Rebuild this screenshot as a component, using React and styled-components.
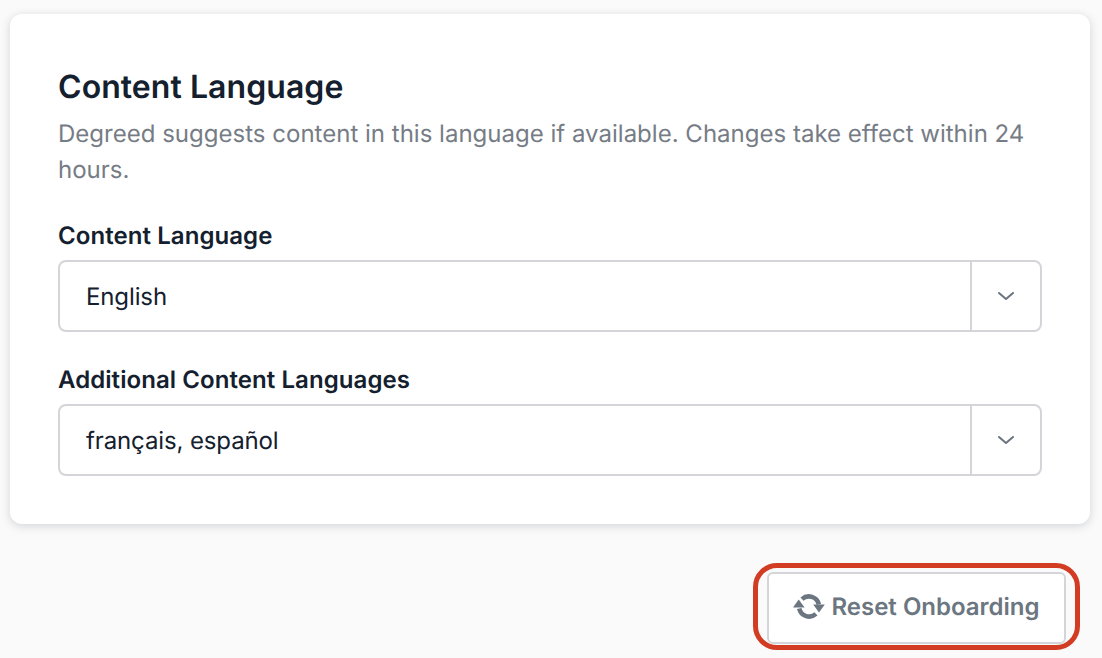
import React from 'react';
import styled, { createGlobalStyle } from 'styled-components';

const GlobalStyle = createGlobalStyle`
  html, body {
    margin: 0;
    padding: 0;
    background: #fafafa;
    font-family: Inter, "Liberation Sans", sans-serif;
    text-rendering: geometricPrecision;
  }
`;

const RefreshIcon = () => (
  <svg width="32" height="25" viewBox="0 0 32 25" fill="#6b7680">
    <path d="M9 5.1 A10.2 10.2 0 0 1 25.8 10.4" fill="none" stroke="#6b7680" strokeWidth="4.6" />
    <path d="M6.2 14.6 A10.2 10.2 0 0 0 23 19.9" fill="none" stroke="#6b7680" strokeWidth="4.6" />
    <path d="M5.7 5.6 L11.6 13.4 H0 Z" />
    <path d="M26 18.6 L20.2 10.6 H31.8 Z" />
  </svg>
);

const Chevron = () => (
  <svg width="18" height="10" viewBox="0 0 18 10" fill="none" stroke="#6b7280" strokeWidth="2" strokeLinecap="round" strokeLinejoin="round">
    <path d="M2 2 L9 8 L16 2" />
  </svg>
);

const fields = [
  { label: 'Content Language', value: 'English' },
  { label: 'Additional Content Languages', value: 'français, español' },
];

export default function App() {
  return (
    <Page>
      <GlobalStyle />
      <Card>
        <Title>Content Language</Title>
        <Description>
          Degreed suggests content in this language if available. Changes take effect within 24 hours.
        </Description>
        {fields.map((field) => (
          <Field key={field.label}>
            <Label>{field.label}</Label>
            <Select>
              <SelectValue>{field.value}</SelectValue>
              <SelectArrow><Chevron /></SelectArrow>
            </Select>
          </Field>
        ))}
      </Card>
      <Footer>
        <FocusRing>
          <ResetButton>
            <RefreshIcon />
            Reset Onboarding
          </ResetButton>
        </FocusRing>
      </Footer>
    </Page>
  );
}

const Page = styled.div`
  width: 1102px;
  height: 658px;
  box-sizing: border-box;
  padding: 14px 12px 0 10px;
  overflow: hidden;
`;

const Card = styled.section`
  box-sizing: border-box;
  height: 510px;
  padding: 52px 48px 0;
  background: #fff;
  border-radius: 12px;
  box-shadow: 0 2px 10px rgba(30, 40, 60, 0.18);
`;

const Title = styled.h2`
  margin: 0;
  font-size: 32px;
  line-height: 42px;
  font-weight: 600;
  letter-spacing: 0.06px;
  color: #14202e;
`;

const Description = styled.p`
  margin: 8px 0 0;
  font-size: 24px;
  line-height: 36px;
  letter-spacing: 0.01px;
  color: #767c85;
`;

const Field = styled.div`
  margin-top: 30px;

  & + & {
    margin-top: 30px;
  }
`;

const Label = styled.div`
  font-size: 24px;
  line-height: 36px;
  font-weight: 600;
  letter-spacing: 0.07px;
  color: #14202e;
  margin-bottom: 6px;
`;

const Select = styled.div`
  display: flex;
  box-sizing: border-box;
  height: 72px;
  border: 2px solid #d4d5d9;
  border-radius: 8px;
`;

const SelectValue = styled.div`
  flex: 1;
  display: flex;
  align-items: center;
  padding-left: 26px;
  font-size: 24px;
  letter-spacing: -0.12px;
  color: #14202e;
`;

const SelectArrow = styled.div`
  width: 68px;
  display: flex;
  align-items: center;
  justify-content: center;
  border-left: 2px solid #d4d5d9;
`;

const Footer = styled.div`
  display: flex;
  justify-content: flex-end;
  margin-top: 39px;
  padding-right: 10px;
`;

const FocusRing = styled.div`
  box-sizing: border-box;
  padding: 4px 9px 1px;
  border: 5px solid #d13c22;
  border-radius: 24px;
`;

const ResetButton = styled.button`
  display: flex;
  align-items: center;
  justify-content: center;
  gap: 6px;
  box-sizing: border-box;
  width: 299px;
  height: 72px;
  padding: 0 0 3px;
  background: #fff;
  border: 2px solid #d4d5d9;
  border-radius: 6px;
  font-family: inherit;
  font-size: 24px;
  font-weight: 600;
  color: #6b7680;
  text-rendering: inherit;
`;
